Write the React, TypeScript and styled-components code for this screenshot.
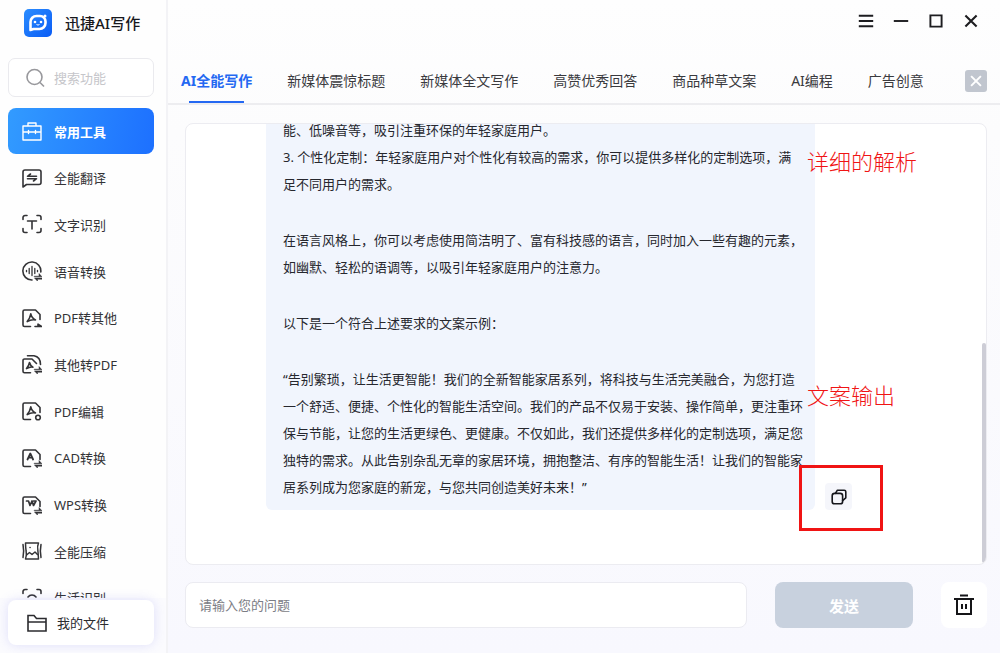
import React from "react";
import styled, { createGlobalStyle } from "styled-components";

const GlobalStyle = createGlobalStyle`
  * { box-sizing: border-box; }
  body {
    margin: 0;
    font-family: "Noto Sans", "Noto Sans CJK SC", sans-serif;
    font-size: 13px;
    color: #2b2b2f;
  }
  button, input { font: inherit; color: inherit; }
  button { border: 0; padding: 0; background: none; cursor: pointer; }
  svg { flex-shrink: 0; }
`;

const AppFrame = styled.div`
  display: flex;
  height: 100vh;
  min-height: 480px;
  background: #fff;
`;

const Sidebar = styled.aside`
  position: relative;
  display: flex;
  flex-direction: column;
  flex: 0 0 166px;
  padding: 8px 12px 0 8px;
  background: #fefefe;
  overflow: hidden;
`;

const Brand = styled.div`
  display: flex;
  align-items: center;
  gap: 13px;
  height: 30px;
  padding-left: 16px;
  color: #17181c;
  font-size: 15px;
  font-weight: 500;
  line-height: 20px;
`;

const SearchBox = styled.label`
  display: flex;
  align-items: center;
  gap: 9px;
  height: 39px;
  margin: 20px 0 11px;
  padding: 0 16px;
  border: 1px solid #eaeaee;
  border-radius: 7px;
  background: #fff;
  flex-shrink: 0;
`;

const SearchInput = styled.input`
  width: 100%;
  min-width: 0;
  padding: 0;
  border: 0;
  outline: 0;
  background: none;
  &::placeholder { color: #c6c6ca; opacity: 1; }
`;

const ToolNav = styled.nav`
  display: flex;
  flex: 1;
  flex-direction: column;
  justify-content: space-between;
  padding-bottom: 32px;
`;

const ToolButton = styled.button<{ $active?: boolean }>`
  display: flex;
  align-items: center;
  gap: 12px;
  height: 46px;
  padding-left: 14px;
  border-radius: 8px;
  background: ${(p) => (p.$active ? "linear-gradient(100deg, #329bff, #1d70ff)" : "none")};
  color: ${(p) => (p.$active ? "#fff" : "#333336")};
  font-weight: ${(p) => (p.$active ? 700 : 400)};
`;

const FilesDock = styled.div`
  position: absolute;
  right: 0;
  bottom: 0;
  left: 0;
  padding: 2px 12px 8px 8px;
  background: #fbfbfe;
`;

const FilesButton = styled.button`
  display: flex;
  align-items: center;
  gap: 10px;
  width: 100%;
  height: 45px;
  padding-left: 19px;
  border-radius: 8px;
  background: #fff;
  box-shadow: 0 0 12px rgba(110, 110, 230, 0.2);
`;

const Main = styled.main`
  display: flex;
  flex: 1;
  flex-direction: column;
  min-width: 0;
  border-left: 2px solid #f3f3f6;
  background: linear-gradient(#fefefe, #fcfcfd 20%, #f8f8fe);
`;

const WindowBar = styled.header`
  display: flex;
  justify-content: flex-end;
  align-items: center;
  gap: 19px;
  height: 42px;
  padding-right: 21px;
`;

const WindowButton = styled.button`
  display: flex;
  width: 16px;
  height: 16px;
  color: #1d1d20;
`;

const TabBar = styled.div`
  display: flex;
  align-items: center;
  justify-content: space-between;
  height: 63px;
  padding: 16px 13px 0 13px;
  border-bottom: 2px solid #ededf0;
`;

const Tabs = styled.nav`
  display: flex;
  gap: 35px;
  height: 100%;
`;

const Tab = styled.button<{ $active?: boolean }>`
  position: relative;
  padding-bottom: 2px;
  font-size: 14px;
  white-space: nowrap;
  color: ${(p) => (p.$active ? "#2468f2" : "#3a3a3e")};
  font-weight: ${(p) => (p.$active ? 700 : 400)};
  &::after {
    content: "";
    position: absolute;
    right: 8px;
    bottom: 0;
    left: 8px;
    height: 2px;
    background: ${(p) => (p.$active ? "#2468f2" : "transparent")};
  }
`;

const CloseTabs = styled.button`
  display: grid;
  place-items: center;
  width: 22px;
  height: 22px;
  border-radius: 3px;
  background: #c1c6cf;
  color: #fff;
`;

const Workspace = styled.section`
  display: flex;
  flex: 1;
  flex-direction: column;
  gap: 17px;
  min-height: 0;
  padding: 18px 13px 25px 17px;
`;

const ChatPanel = styled.div`
  position: relative;
  display: flex;
  flex: 1;
  flex-direction: column;
  justify-content: flex-end;
  min-height: 0;
  padding: 0 0 54px 80px;
  border: 1px solid #ececf1;
  border-radius: 8px;
  background: #fff;
  overflow: hidden;
`;

const ScrollThumb = styled.div`
  position: absolute;
  right: 0;
  bottom: 1px;
  width: 4px;
  height: 50%;
  border-radius: 2px;
  background: #cdcdd6;
`;

const MessageRow = styled.div`
  position: relative;
  display: flex;
  align-items: flex-end;
  gap: 10px;
`;

const Bubble = styled.article`
  display: flex;
  flex: 0 1 549px;
  flex-direction: column;
  gap: 29px;
  padding: 10px 8px 9px 17px;
  border-radius: 6px;
  background: #f1f5fd;
  color: #26272e;
`;

const Paragraph = styled.p`
  margin: 0;
  line-height: 27px;
  white-space: pre-line;
`;

const CopyArea = styled.div`
  position: relative;
`;

const CopyButton = styled.button`
  display: grid;
  place-items: center;
  width: 27px;
  height: 27px;
  border-radius: 4px;
  background: #f5f6fb;
  color: #16171c;
`;

const Highlight = styled.div`
  position: absolute;
  inset: -18px -31px -21px -26px;
  border: 3px solid #f01414;
  pointer-events: none;
`;

const Note = styled.span<{ $bottom: number }>`
  position: absolute;
  bottom: ${(p) => p.$bottom}px;
  left: 541px;
  color: #f01414;
  font-size: 22px;
  font-weight: 300;
  line-height: 32px;
  white-space: nowrap;
`;

const Composer = styled.form`
  display: flex;
  align-items: stretch;
  gap: 28px;
  height: 46px;
`;

const Question = styled.input`
  flex: 1;
  min-width: 0;
  padding: 0 13px;
  border: 1px solid #ebebf1;
  border-radius: 8px;
  outline: 0;
  background: #fff;
  &::placeholder { color: #7c7d85; opacity: 1; }
`;

const SendButton = styled.button`
  width: 138px;
  border-radius: 8px;
  background: #c8d1de;
  color: #fff;
  font-size: 15px;
  font-weight: 700;
`;

const ClearButton = styled.button`
  display: grid;
  place-items: center;
  width: 46px;
  border-radius: 8px;
  background: #fff;
  color: #151518;
`;

type IconProps = { size?: number; width?: number; children: React.ReactNode };

const Icon = ({ size = 20, width = 1.6, children }: IconProps) => (
  <svg
    width={size}
    height={size}
    viewBox="0 0 20 20"
    fill="none"
    stroke="currentColor"
    strokeWidth={width}
    strokeLinecap="round"
    strokeLinejoin="round"
    aria-hidden="true"
  >
    {children}
  </svg>
);

const Page = () => <path d="M8.5 18.5H2.500a1.500 1.500 0 0 1-1.500-1.500V3.500A1.500 1.500 0 0 1 2.500 2H13.500L18 6.500v5" />;
const Acrobat = () => (
  <path d="M8.800 5.800c.6 3 2 4.800 4.700 6.200-3-.8-5.600 0-8.300 1.600C7 11.300 8.300 8.800 8.800 5.800Z" />
);
const Swap = () => (
  <path
    d="M12.500 15.200h4.500v-2.700l3 3.300h-7.500ZM20 17h-7.500l3 3.200v-2h4.500Z"
    fill="currentColor"
    strokeWidth="0.500"
  />
);
const Corners = () => (
  <path d="M1 5.500V3.500a2 2 0 0 1 2-2h2M15 1.500h2a2 2 0 0 1 2 2v2M19 14.500v2a2 2 0 0 1-2 2h-2M5 18.500H3a2 2 0 0 1-2-2v-2" />
);

const icons: Record<string, React.ReactNode> = {
  toolbox: (
    <Icon width={1.400}>
      <path d="M1 5h18v14H1zM6 5V2h8v3M1 11h4.500M7.500 11h5M14.500 11H19M6.500 9.500v3M13.500 9.500v3" />
    </Icon>
  ),
  translate: (
    <Icon>
      <path d="M1 19V4a2 2 0 0 1 2-2h14a2 2 0 0 1 2 2v10.500a2 2 0 0 1-2 2H4.500L1 19Z" />
      <path d="M14.500 8.300h-9L8.500 6M5.500 10.700h9L11.500 13" />
    </Icon>
  ),
  text: (
    <Icon>
      <Corners />
      <path d="M5.500 7h9M10 7v8" />
    </Icon>
  ),
  voice: (
    <Icon>
      <path d="M18.800 11A9 9 0 1 0 10 19" />
      <path d="M4.500 9.300v1.400M7.200 7.500v5M10 5.500v9M12.800 7.500v5M15.500 9.300v1.400" strokeWidth="1.300" />
      <Swap />
    </Icon>
  ),
  pdfOut: (
    <Icon>
      <Page />
      <Acrobat />
      <path d="M13 18.500h6.500L16 16.200v2.300" fill="currentColor" />
    </Icon>
  ),
  pdfIn: (
    <Icon>
      <path d="M8.500 18.800H2.500A1.500 1.500 0 0 1 1 17.300V6.500A1.500 1.500 0 0 1 2.500 5h7.500l4.500 4.500M5.500 1.800H12Q18.500 3 18.500 10.500" />
      <path d="M7.500 8.500c.5 2.200 1.500 3.600 3.500 4.600-2.300-.5-4.300.2-6.500 1.500C6.200 12.800 7 11 7.500 8.500Z" />
      <Swap />
    </Icon>
  ),
  pdfEdit: (
    <Icon>
      <Page />
      <Acrobat />
      <circle cx="16" cy="16.500" r="2.300" />
    </Icon>
  ),
  cad: (
    <Icon>
      <Page />
      <path d="m5.500 11.500 2.800-6 2.800 6M6.700 9.700h3.400" strokeWidth="1.800" />
      <Swap />
    </Icon>
  ),
  wps: (
    <Icon>
      <Page />
      <path d="M4.500 6h2l1.500 4.500 2-4.500 1.500 4.500L14 6h-2.500" strokeWidth="1.700" />
      <Swap />
    </Icon>
  ),
  compress: (
    <Icon width={1.500}>
      <path d="M3.500 2h13c-1.200 2.500-1.200 4.500-.6 8 .4 3 .4 5.500.6 8h-13c1.200-2.500 1.200-5 .6-8-.4-3-.6-5.500-.6-8ZM1 3.500c.9 4.500.9 8.500 0 13M19 3.500c-.9 4.500-.9 8.500 0 13" />
      <path d="m4.500 14 3-2.500 2.500 2 3-2.500 2.500 2.500M8 6.500h.1" />
    </Icon>
  ),
  life: (
    <Icon>
      <Corners />
      <path d="M6 9a5 5 0 0 1 8 0M6 13h8" />
    </Icon>
  ),
};

const tools = [
  { icon: "toolbox", label: "常用工具" },
  { icon: "translate", label: "全能翻译" },
  { icon: "text", label: "文字识别" },
  { icon: "voice", label: "语音转换" },
  { icon: "pdfOut", label: "PDF转其他" },
  { icon: "pdfIn", label: "其他转PDF" },
  { icon: "pdfEdit", label: "PDF编辑" },
  { icon: "cad", label: "CAD转换" },
  { icon: "wps", label: "WPS转换" },
  { icon: "compress", label: "全能压缩" },
  { icon: "life", label: "生活识别" },
];

const tabs = [
  "AI全能写作",
  "新媒体震惊标题",
  "新媒体全文写作",
  "高赞优秀回答",
  "商品种草文案",
  "AI编程",
  "广告创意",
];

const paragraphs = [
  "能、低噪音等，吸引注重环保的年轻家庭用户。\n3. 个性化定制：年轻家庭用户对个性化有较高的需求，你可以提供多样化的定制选项，满\n足不同用户的需求。",
  "在语言风格上，你可以考虑使用简洁明了、富有科技感的语言，同时加入一些有趣的元素，\n如幽默、轻松的语调等，以吸引年轻家庭用户的注意力。",
  "以下是一个符合上述要求的文案示例：",
  "“告别繁琐，让生活更智能！我们的全新智能家居系列，将科技与生活完美融合，为您打造\n一个舒适、便捷、个性化的智能生活空间。我们的产品不仅易于安装、操作简单，更注重环\n保与节能，让您的生活更绿色、更健康。不仅如此，我们还提供多样化的定制选项，满足您\n独特的需求。从此告别杂乱无章的家居环境，拥抱整洁、有序的智能生活！让我们的智能家\n居系列成为您家庭的新宠，与您共同创造美好未来！”",
];

const Logo = () => (
  <svg width="28" height="28" viewBox="0 0 28 28" aria-hidden="true">
    <defs>
      <linearGradient id="logo" x1="0" y1="0" x2="1" y2="1">
        <stop offset="0" stopColor="#2b8dff" />
        <stop offset="1" stopColor="#0a5cf5" />
      </linearGradient>
    </defs>
    <rect width="28" height="28" rx="5" fill="url(#logo)" />
    <path
      d="M6.500 21V13a6 6 0 0 1 6-6h3.500a5.500 5.500 0 0 1 5.500 5.500v1.500A6 6 0 0 1 15.500 20H9.500Z"
      fill="none"
      stroke="#fff"
      strokeWidth="2.600"
      strokeLinejoin="round"
    />
    <circle cx="11" cy="13" r="1.300" fill="#fff" />
    <circle cx="17" cy="13" r="1.300" fill="#fff" />
    <path d="M12.500 15.500q1.500 1.200 3 0" stroke="#fff" strokeWidth="1" fill="none" />
    <circle cx="21" cy="7" r="1.500" fill="#fff" />
  </svg>
);

export default function App() {
  return (
    <AppFrame>
      <GlobalStyle />
      <Sidebar>
        <Brand>
          <Logo />
          迅捷AI写作
        </Brand>
        <SearchBox>
          <svg width="20" height="20" viewBox="0 0 20 20" fill="none" stroke="#98989c" strokeWidth="1.600" aria-hidden="true">
            <circle cx="9.500" cy="9" r="7.500" />
            <path d="m15 14.500 4 4" />
          </svg>
          <SearchInput aria-label="搜索功能" placeholder="搜索功能" />
        </SearchBox>
        <ToolNav>
          {tools.map((tool, i) => (
            <ToolButton key={tool.label} type="button" $active={i === 0}>
              {icons[tool.icon]}
              {tool.label}
            </ToolButton>
          ))}
        </ToolNav>
        <FilesDock>
          <FilesButton type="button">
            <Icon>
              <path d="M1 18V2.500h6l2.500 3H19V18H1ZM1 9h18" strokeLinejoin="miter" />
            </Icon>
            我的文件
          </FilesButton>
        </FilesDock>
      </Sidebar>

      <Main>
        <WindowBar>
          <WindowButton type="button" aria-label="菜单">
            <Icon size={16} width={2.400}><path d="M1 3.500h18M1 10h18M1 16.500h18" strokeLinecap="butt" /></Icon>
          </WindowButton>
          <WindowButton type="button" aria-label="最小化">
            <Icon size={16} width={2.400}><path d="M1 10h18" strokeLinecap="butt" /></Icon>
          </WindowButton>
          <WindowButton type="button" aria-label="最大化">
            <Icon size={16} width={2.400}><path d="M3 3h14v14H3z" strokeLinejoin="miter" /></Icon>
          </WindowButton>
          <WindowButton type="button" aria-label="关闭">
            <Icon size={16} width={2.600}><path d="m3 3 14 14M17 3 3 17" strokeLinecap="butt" /></Icon>
          </WindowButton>
        </WindowBar>
        <TabBar>
          <Tabs>
            {tabs.map((tab, i) => (
              <Tab key={tab} type="button" $active={i === 0}>{tab}</Tab>
            ))}
          </Tabs>
          <CloseTabs type="button" aria-label="关闭标签">
            <Icon size={14} width={2.800}><path d="m3 3 14 14M17 3 3 17" strokeLinecap="butt" /></Icon>
          </CloseTabs>
        </TabBar>

        <Workspace>
          <ChatPanel>
            <MessageRow>
              <Bubble>
                {paragraphs.map((text) => (
                  <Paragraph key={text}>{text}</Paragraph>
                ))}
              </Bubble>
              <CopyArea>
                <CopyButton type="button" aria-label="复制">
                  <Icon size={16} width={2}>
                    <rect x="1.500" y="5.500" width="13" height="13" rx="3" />
                    <path d="M5.500 5.500 8 1.500h8.500a2 2 0 0 1 2 2V11l-4 3.500" />
                  </Icon>
                </CopyButton>
                <Highlight />
              </CopyArea>
              <Note $bottom={333}>详细的解析</Note>
              <Note $bottom={99}>文案输出</Note>
            </MessageRow>
            <ScrollThumb />
          </ChatPanel>
          <Composer onSubmit={(e) => e.preventDefault()}>
            <Question aria-label="请输入您的问题" placeholder="请输入您的问题" />
            <SendButton type="submit">发送</SendButton>
            <ClearButton type="button" aria-label="清空">
              <svg width="20" height="22" viewBox="0 0 20 22" fill="none" stroke="currentColor" strokeWidth="2" aria-hidden="true">
                <path d="M6 1.500h8M0 5h20M3 5v15h14V5M8 10v5M12 10v5" />
              </svg>
            </ClearButton>
          </Composer>
        </Workspace>
      </Main>
    </AppFrame>
  );
}
